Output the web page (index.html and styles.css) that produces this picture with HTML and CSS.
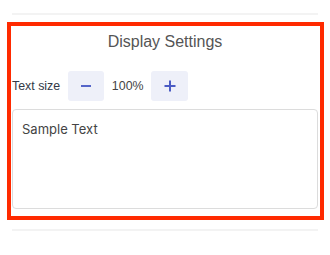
FILE: index.html
```html
<!DOCTYPE html>
<html>
<head>
<meta charset="utf-8">
<link rel="stylesheet" href="styles.css">
</head>
<body>
<div class="page">
  <div class="rule rule-top"></div>
  <section class="panel">
    <h2 class="title">Display Settings</h2>
    <div class="row">
      <span class="label">Text size</span>
      <button class="step" aria-label="decrease">
        <svg width="12" height="12" viewBox="0 0 12 12"><path d="M1 6H11" stroke="#5565c9" stroke-width="2"/></svg>
      </button>
      <span class="value">100%</span>
      <button class="step" aria-label="increase">
        <svg width="12" height="12" viewBox="0 0 12 12"><path d="M0.5 6H11.5M6 0.5V11.5" stroke="#4a5bc4" stroke-width="2"/></svg>
      </button>
    </div>
    <div class="sample">Sample Text</div>
  </section>
  <div class="rule rule-bottom"></div>
</div>
</body>
</html>
```
FILE: styles.css
```css
html, body {
  margin: 0;
  padding: 0;
  background: #fff;
}
.page {
  width: 330px;
  font-family: "Liberation Sans", Arial, sans-serif;
}
.rule {
  height: 2px;
  background: #f3f3f3;
  margin: 0 12px;
}
.rule-top {
  margin-top: 13px;
}
.rule-bottom {
  margin-top: 9px;
}
.panel {
  margin: 7px 6px 0 7px;
  border: 4px solid #ff2a00;
  padding: 0 2px 7px 1px;
}
.title {
  margin: 7px 0 0;
  font-size: 16px;
  font-weight: normal;
  line-height: 18px;
  color: #555;
  text-align: center;
}
.row {
  display: flex;
  align-items: center;
  margin-top: 20px;
  height: 30px;
}
.label {
  font-size: 12.4px;
  color: #333a48;
  margin-right: 8px;
}
.step {
  width: 36px;
  height: 30px;
  border: none;
  border-radius: 3px;
  background: #eef0f9;
  padding: 0;
  display: flex;
  align-items: center;
  justify-content: center;
}
.step:last-child {
  width: 37px;
}
.value {
  width: 47px;
  text-align: center;
  font-size: 12.4px;
  color: #444;
}
.sample {
  margin-top: 8px;
  border: 1px solid #dcdcdc;
  border-radius: 4px;
  padding: 11px 9px 0;
  font-family: Inter, "Liberation Sans", sans-serif;
  font-size: 13px;
  line-height: 16px;
  color: #444;
  box-sizing: border-box;
  height: 100px;
}
```
